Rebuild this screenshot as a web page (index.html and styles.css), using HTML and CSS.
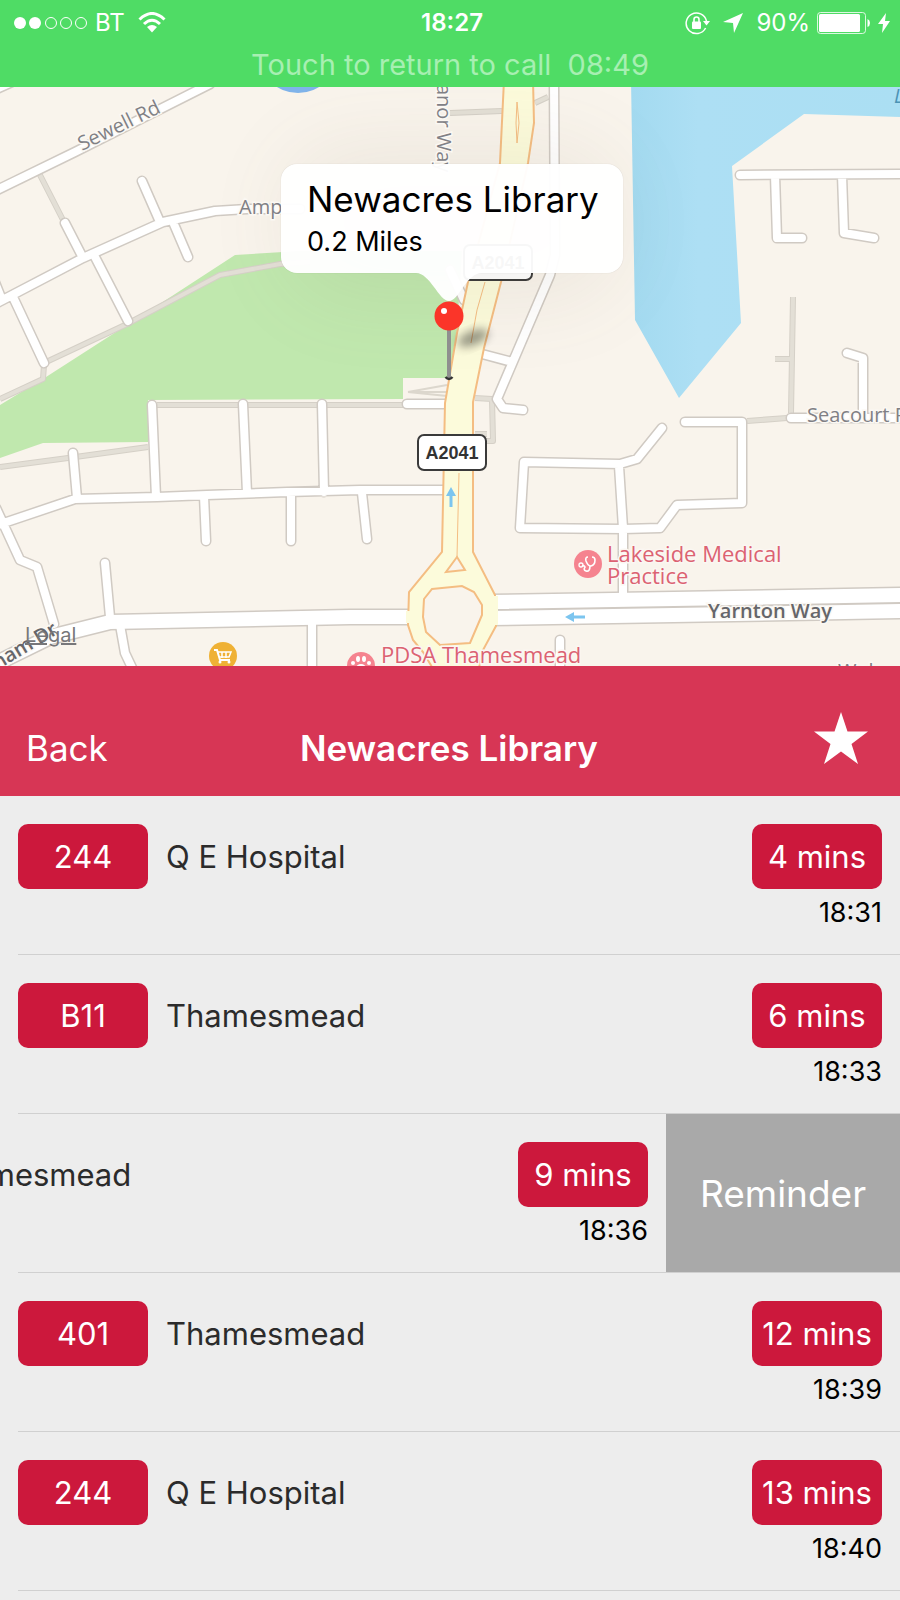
FILE: index.html
```html
<!DOCTYPE html>
<html lang="en">
<head>
<meta charset="utf-8">
<meta name="viewport" content="width=device-width, initial-scale=1">
<title>Newacres Library</title>
<link rel="stylesheet" href="styles.css">
</head>
<body>
<header class="status">
  <div class="status-row">
    <div class="status-side">
      <svg class="signal" width="74" height="14" viewBox="0 0 74 14" aria-hidden="true">
        <g fill="#fff"><circle cx="6" cy="7" r="6"/><circle cx="21" cy="7" r="6"/></g>
        <g fill="none" stroke="#fff"><circle cx="37" cy="7" r="5.5"/><circle cx="52" cy="7" r="5.5"/><circle cx="67" cy="7" r="5.5"/></g>
      </svg>
      <span class="carrier">BT</span>
      <svg class="wifi" width="28" height="22" viewBox="0 0 28 22" aria-hidden="true">
        <g fill="none" stroke="#fff" stroke-width="3"><path d="M1.5 7.5Q14-4.500 26.500 7.500"/><path d="M6 12Q14 4.500 22 12"/></g>
        <path d="M9 15Q14 11 19 15L14 20.500Z" fill="#fff"/>
      </svg>
    </div>
    <time class="clock">18:27</time>
    <div class="status-side status-right">
      <svg width="25" height="24" viewBox="0 0 25 24" aria-hidden="true">
        <path d="M20.600 17A10.300 10.300 0 1 1 21.500 10" fill="none" stroke="#fff" stroke-width="1.500"/>
        <path d="M18 10H25L21.500 14.500Z" fill="#fff"/>
        <rect x="7" y="10.500" width="9" height="7.500" rx="1" fill="#fff"/>
        <path d="M9 11V8.500a2.500 2.500 0 0 1 5 0V11" fill="none" stroke="#fff" stroke-width="1.600"/>
      </svg>
      <svg class="locate" width="20" height="20" viewBox="0 0 20 20" aria-hidden="true"><path d="M20 0L11 20L10 10L0 9Z" fill="#fff"/></svg>
      <span>90%</span>
      <svg width="54" height="22" viewBox="0 0 54 22" aria-hidden="true">
        <rect x=".5" y=".5" width="48" height="21" rx="3" fill="none" stroke="#fff" stroke-opacity=".8"/>
        <rect x="2" y="2" width="41" height="18" rx="1.500" fill="#fff"/>
        <path d="M50.500 7Q53 8 53 11T50.500 15Z" fill="#fff"/>
      </svg>
      <svg width="12" height="20" viewBox="0 0 12 20" aria-hidden="true"><path d="M8 0L0 11H5L4 20L12 8H7Z" fill="#fff"/></svg>
    </div>
  </div>
  <button class="call" type="button">Touch to return to call  08:49</button>
</header>

<main>
<section class="map" aria-label="Map">
  <svg class="map-art" viewBox="0 87 900 579" preserveAspectRatio="xMidYMid slice">
    <defs>
      <path id="paths" d="M40 175L63 220M44 363L125 325L220 275L280 264L310 262M44 365L43 379L0 399M0 467L68 458L148 447M157 405H403M450 113L502 111M535 103L548 97M475 398L492 399L493 441H486M475 434H487M793 297L791 413M775 359H793M747 421L787 418"/>
      <path id="streets" d="M-5 191L75 152L210 84M-10 92L12 82M-6 280L2 300M-5 304L83 258L163 222L215 211L247 209H300M65 223L82 256M95 257L128 321M142 181L160 222M173 222L188 257M13 297L44 363M-5 526L75 499L157 497L207 495L287 492L360 490H446M73 453L77 498M152 405L156 497M243 404L247 493M322 404L324 492M204 496L206 541M291 496V541M362 493L367 539M-4 508L20 560L37 567L54 624M407 404H450M105 563L110 617M120 625L125 653L134 672M312 622V672M554 80L555 255L550 275L497 399L503 408L523 410M482 354L512 362M450 270L464 300M740 175L905 174M775 175L777 238H802M842 175L844 233L874 238M847 353L863 358V418M791 418H905M685 422H742V503L677 505L660 528L623 529L520 528L524 462L620 464L637 459L662 428M619 466L623 528V598M560 640V670"/>
      <path id="mains" d="M-5 664L50 637L110 622L350 617H415M490 602L905 595M490 618L905 611"/>
      <linearGradient id="water" x1="0" x2="1"><stop offset="0" stop-color="#a3daf0"/><stop offset=".25" stop-color="#addff4"/><stop offset="1" stop-color="#abdff3"/></linearGradient>
      <filter id="soft" x="-50%" y="-50%" width="200%" height="200%"><feGaussianBlur stdDeviation="5"/></filter>
      <filter id="haze" x="-50%" y="-100%" width="200%" height="300%"><feGaussianBlur stdDeviation="45"/></filter>
    </defs>
    <rect y="87" width="900" height="579" fill="#f9f4ec"/>
    <circle cx="298" cy="53" r="40" fill="#7fb3ea"/>
    <path class="park" d="M0 405L46 377L172 296L235 255L300 251H462L457 330L450 378H403V399L148 400V442L43 443L0 458Z"/>
    <path d="M631 80L635 320L679 398L741 323L732 166L804 114L900 117V80Z" fill="url(#water)"/>
    <path d="M408 392L447 385M408 392L447 396M408 392H447" fill="none" stroke="#dcd7cd" stroke-width="2"/>
    <use href="#paths" class="path-edge"/><use href="#paths" class="path-fill"/>
    <use href="#streets" class="street-edge"/><use href="#mains" class="main-edge"/>
    <use href="#streets" class="street-fill"/><use href="#mains" class="main-fill"/>
    <path class="a-road" d="M504 80L500 163L468 282L457 333L445 403L442 552L409 592L408 625L413 640L423 652L435 672H478L483 650L496 626L495 595L473 552V402L484 348L501 282L528 163L534 123L533 80Z"/>
    <path class="island" d="M432 589L462 586L474 592L482 605V615L470 643L440 645L426 632L423 617L424 599ZM457 557L446 572L465 570Z"/>
    <path class="median" d="M459 473L457 557M517 102L519 123L517 143L516 123ZM485 282L477 310L471 343"/>
    <path d="M408 611V623M496 596V625" stroke="#fcfbdb" stroke-width="4"/>
    <path d="M451 507V491M585 617H569" fill="none" stroke="#7cc5ef" stroke-width="3"/>
    <path d="M446 496L451 487L456 496ZM574 612L565 617L574 622Z" fill="#7cc5ef"/>
    <g class="shield"><rect x="464" y="245" width="68" height="35" rx="6"/><text x="498" y="269">A2041</text></g>
    <g class="shield"><rect x="418" y="435" width="68" height="35" rx="6"/><text x="452" y="459">A2041</text></g>
    <rect x="290" y="150" width="325" height="145" rx="50" fill="#6b5a40" opacity=".09" filter="url(#haze)"/>

    <g class="road-name">
      <text transform="translate(82 151) rotate(-26)">Sewell Rd</text>
      <text x="239" y="214">Amp</text>
      <text transform="translate(437 66) rotate(90)">Manor Way</text>
      <text x="807" y="422">Seacourt Rd</text>
      <text x="838" y="678">Wol</text>
    </g>
    <g class="road-name strong">
      <text x="708" y="618">Yarnton Way</text>
      <text transform="translate(59 633) rotate(-31)" text-anchor="end">ham Dr</text>
    </g>
    <text class="water-name" x="894" y="103">L</text>

    <circle cx="223" cy="656" r="14" fill="#efb135"/>
    <g fill="none" stroke="#fff" stroke-width="2"><path d="M214 650H217L220 660H230"/><path d="M218 652H231L229 657H219M222 652V658M226 652V658" stroke-width="1.500"/></g>
    <g fill="#fff"><circle cx="220" cy="662" r="1.500"/><circle cx="229" cy="662" r="1.500"/></g>
    <circle cx="361" cy="666" r="14" fill="#f5838f"/>
    <g fill="#fff"><circle cx="353" cy="663" r="2"/><ellipse cx="358" cy="659" rx="2" ry="3"/><ellipse cx="364" cy="659" rx="2" ry="3"/><circle cx="369" cy="663" r="2"/><ellipse cx="361" cy="668" rx="5" ry="4"/></g>
    <circle cx="588" cy="564" r="14" fill="#f5838f"/>
    <path d="M588 557Q585 557 586 561Q588 566 591 566Q595 565 595 560Q595 557 592 557M590 566Q590 572 586 571Q583 570 585 567Q584 565 582 566" fill="none" stroke="#fff" stroke-width="1.600"/>
    <circle cx="581" cy="565" r="2" fill="none" stroke="#fff" stroke-width="1.300"/>
    <g class="place">
      <text x="607" y="562">Lakeside Medical</text>
      <text x="607" y="584">Practice</text>
      <text x="381" y="663">PDSA Thamesmead</text>
    </g>
    <ellipse cx="473" cy="338" rx="16" ry="7" transform="rotate(-22 473 338)" opacity=".4" filter="url(#soft)"/>
    <path d="M449 328V378" stroke="#8f8f8f" stroke-width="4"/>
    <path d="M445.500 377Q449 381 452.500 377" fill="none" stroke="#333" stroke-width="2.500"/>
    <circle cx="449" cy="316" r="14.500" fill="#fb3529"/><circle cx="444" cy="311" r="3" fill="#fff"/>
  </svg>
  <div class="callout">
    <h2 class="callout-title">Newacres Library</h2>
    <p class="callout-sub">0.2 Miles</p>
    <svg class="callout-tail" width="66" height="28" viewBox="0 0 66 28" aria-hidden="true"><path d="M0 0C14 0 23 28 33 28S50 0 66 0Z"/></svg>
  </div>
  <a class="legal" href="#legal">Legal</a>
</section>

<nav class="bar">
  <button class="back" type="button">Back</button>
  <h1 class="title">Newacres Library</h1>
  <button class="star" type="button" aria-label="Favourite"><svg width="54" height="52" viewBox="0 0 54 52"><path d="M27 0L33.500 19.500H54L37.500 32L44 52L27 39.500L10 52L16.500 32L0 19.500H20.500Z" fill="#fff"/></svg></button>
</nav>

<ul class="list">
  <li class="item"><div class="row"><span class="badge">244</span><span class="dest">Q E Hospital</span><div class="due"><span class="badge">4 mins</span><time class="at">18:31</time></div></div></li>
  <li class="item"><div class="row"><span class="badge">B11</span><span class="dest">Thamesmead</span><div class="due"><span class="badge">6 mins</span><time class="at">18:33</time></div></div></li>
  <li class="item"><div class="row"><span class="badge"></span><span class="dest">Thamesmead</span><div class="due"><span class="badge">9 mins</span><time class="at">18:36</time></div></div><button class="remind" type="button">Reminder</button></li>
  <li class="item"><div class="row"><span class="badge">401</span><span class="dest">Thamesmead</span><div class="due"><span class="badge">12 mins</span><time class="at">18:39</time></div></div></li>
  <li class="item"><div class="row"><span class="badge">244</span><span class="dest">Q E Hospital</span><div class="due"><span class="badge">13 mins</span><time class="at">18:40</time></div></div></li>
</ul>
</main>
</body>
</html>
```
FILE: styles.css
```css
* { box-sizing: border-box; }
body { margin: 0; background: #ededed; color: #2b2b2b; font-family: Inter, "Liberation Sans", sans-serif; }
h1, h2, p, ul { margin: 0; padding: 0; }
button { border: 0; padding: 0; background: none; color: inherit; font: inherit; }
svg { display: block; flex: none; }

.status { background: #4fdc65; color: #fff; height: 87px; font-size: 24px; line-height: 28px; }
.status-row { display: grid; grid-template-columns: 1fr auto 1fr; align-items: center; height: 45px; padding: 0 10px 0 14px; }
.status-side { display: flex; align-items: center; gap: 7px; }
.carrier { margin-right: 6px; }
.status-right { justify-content: flex-end; }
.locate { margin: 0 6px; }
.clock { font-weight: 600; }
.call { display: block; width: 100%; height: 40px; font-size: 29px; line-height: 40px; white-space: pre; color: #a7efb2; }

.map { position: relative; overflow: hidden; }
.map-art { width: 100%; height: auto; }
.park { fill: #c0e8ae; }
.path-edge, .path-fill, .street-edge, .street-fill, .main-edge, .main-fill { fill: none; stroke-linejoin: round; }
.path-edge { stroke: #d5d0c7; stroke-width: 6px; }
.path-fill { stroke: #e3dfd6; stroke-width: 4px; }
.street-edge { stroke: #d0cac3; stroke-width: 11px; stroke-linecap: round; }
.street-fill { stroke: #fff; stroke-width: 8px; stroke-linecap: round; }
.main-edge { stroke: #d0cac3; stroke-width: 17px; }
.main-fill { stroke: #fff; stroke-width: 14px; }
.a-road { fill: #fcfbdb; stroke: #f4bd82; stroke-width: 2px; }
.island { fill: #f9f4ec; stroke: #f4bd82; stroke-width: 2px; }
.median { fill: none; stroke: #f4bd82; stroke-width: 1px; }
.shield rect { fill: #fff; stroke: #3a3a3a; stroke-width: 2px; }
.shield text { font: bold 18px "Liberation Sans Narrow", "Liberation Sans", sans-serif; fill: #333; text-anchor: middle; }
.road-name { font: 20px "Open Sans", sans-serif; fill: #808085; stroke: #fbf8f3; stroke-width: 3px; paint-order: stroke; }
.strong { font-weight: 600; fill: #66666a; }
.water-name { font: italic 20px "Open Sans", sans-serif; fill: #4c93b5; }
.place { font: 22px "Open Sans", sans-serif; fill: #dc6272; stroke: #fbf7f2; stroke-width: 3px; paint-order: stroke; }

.callout { position: absolute; left: calc(50% + 2px); top: 77px; width: 342px; height: 109px; padding: 14px 26px; transform: translateX(-50%); border-radius: 16px; background: rgba(255, 255, 255, .96); box-shadow: 0 0 1px rgba(0, 0, 0, .2); color: #000; }
.callout-title { font-size: 35px; line-height: 42px; font-weight: 400; white-space: nowrap; }
.callout-sub { font-size: 27px; line-height: 44px; }
.callout-tail { position: absolute; left: 135px; top: 100%; fill: rgba(255, 255, 255, .96); }
.legal { position: absolute; left: 25px; bottom: 19px; font-size: 20px; line-height: 24px; color: #77777a; }

.bar { display: grid; grid-template-columns: 1fr auto 1fr; align-items: center; height: 130px; padding: 34px 28px 0 26px; background: #d73655; color: #fff; }
.back { justify-self: start; font-size: 35px; line-height: 44px; }
.title { font-size: 35px; line-height: 44px; font-weight: 600; }
.star { justify-self: end; margin: 0 4px 20px 0; }

.list { list-style: none; }
.item { position: relative; display: flex; justify-content: flex-end; height: 159px; overflow: hidden; }
.item::after { content: ""; position: absolute; left: 18px; right: 0; bottom: 0; height: 1px; background: #d0d0d0; }
.row { display: flex; flex: 0 0 100%; align-items: flex-start; gap: 18px; padding: 28px 18px 0; font-size: 31px; line-height: 66px; }
.badge { display: block; width: 130px; height: 65px; border-radius: 10px; background: #cc183c; color: #fff; text-align: center; white-space: nowrap; }
.dest { flex: 1; }
.due { text-align: right; }
.at { display: block; font-size: 27px; line-height: 48px; color: #000; }
.remind { flex: 0 0 234px; background: #a9a9a9; color: #fff; font-size: 37px; }
```
